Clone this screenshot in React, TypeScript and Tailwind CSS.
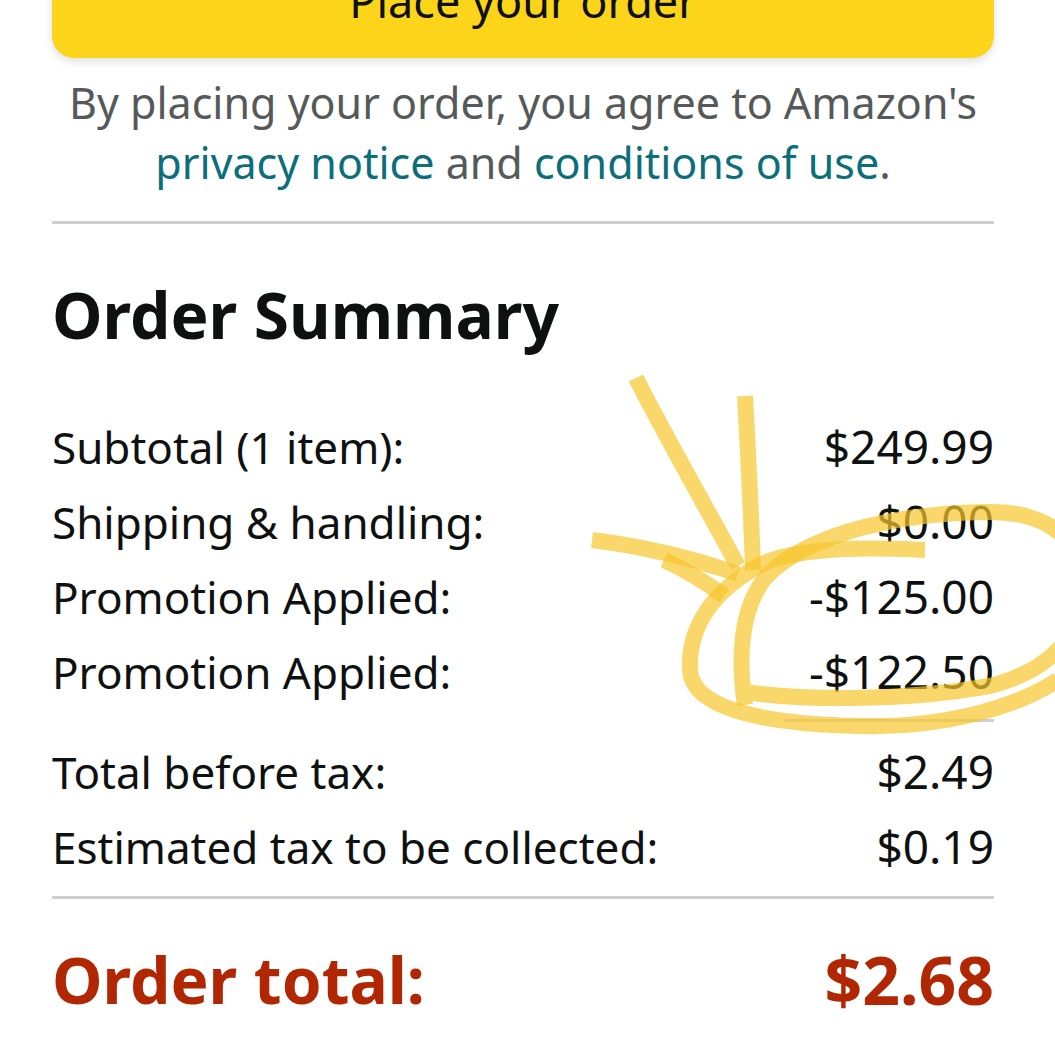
import React from "react";

// 주문 요약 행 데이터
interface Line {
  label: string;
  value: string;
}

const topLines: Line[] = [
  { label: "Subtotal (1 item):", value: "$249.99" },
  { label: "Shipping & handling:", value: "$0.00" },
  { label: "Promotion Applied:", value: "-$125.00" },
  { label: "Promotion Applied:", value: "-$122.50" },
];

const taxLines: Line[] = [
  { label: "Total before tax:", value: "$2.49" },
  { label: "Estimated tax to be collected:", value: "$0.19" },
];

const Row = ({ line }: { line: Line }) => (
  <div className="flex items-center justify-between h-[75px] text-[#0f1111]">
    <span className="text-[44px]">{line.label}</span>
    <span className="text-[46px]">{line.value}</span>
  </div>
);

// 형광펜 낙서 (화살표 + 동그라미)
const Scribble = () => (
  <svg
    className="absolute inset-0 pointer-events-none"
    width="1055"
    height="1055"
    viewBox="0 0 1055 1055"
    fill="none"
  >
    <g
      stroke="#f6c62b"
      strokeOpacity="0.7"
      strokeWidth="16"
      strokeLinecap="butt"
      strokeLinejoin="round"
    >
      {/* arrow */}
      <path d="M636 378 C662 430, 702 500, 738 566" />
      <path d="M745 396 C748 450, 751 510, 753 570" />
      <path d="M592 540 C640 546, 692 558, 738 574" />
      <path d="M664 560 C690 572, 708 584, 724 596" />
      {/* outer loop */}
      <path d="M925 550 C880 548, 800 545, 760 565 C715 590, 688 625, 690 670 C692 708, 760 724, 860 726 C950 728, 1020 705, 1058 680" />
      {/* inner loop */}
      <path d="M745 705 C738 660, 740 610, 765 578 C800 540, 880 514, 985 512 C1050 510, 1088 545, 1085 592 C1080 640, 1045 672, 990 686 C900 702, 800 700, 745 692" />
    </g>
  </svg>
);

export default function App() {
  return (
    <div
      className="relative w-[1055px] h-[1055px] overflow-hidden bg-white"
      style={{ fontFamily: '"Noto Sans", "Open Sans", Arial, sans-serif' }}
    >
      <div className="pl-[52px] pr-[61px]">
        {/* 주문 버튼 (위쪽 잘림) */}
        <div className="-mt-[56px] h-[114px] rounded-[22px] bg-[#fcd419] flex items-center justify-center shadow-[0_4px_10px_rgba(0,0,0,0.12)]">
          <span className="text-[45px] text-[#0f1111]">Place your order</span>
        </div>

        <p className="mt-[15px] text-center text-[43px] leading-[60px] text-[#565959]">
          By placing your order, you agree to Amazon's{" "}
          <span className="text-[#0b6e7a]">privacy notice</span> and{" "}
          <span className="text-[#0b6e7a]">conditions of use</span>.
        </p>

        <div className="mt-[28px] h-[3px] bg-[#cfcfcf]" />

        <h2 className="mt-[53px] text-[64px] leading-[76px] font-bold text-[#0f1111]">
          Order Summary
        </h2>

        <div className="mt-[56px]">
          {topLines.map((l, i) => (
            <Row key={i} line={l} />
          ))}
        </div>

        <div className="flex justify-end mt-[10px]">
          <div className="w-[210px] h-[3px] bg-[#cfcfcf]" />
        </div>

        <div className="mt-[12px]">
          {taxLines.map((l, i) => (
            <Row key={i} line={l} />
          ))}
        </div>

        <div className="mt-[12px] h-[3px] bg-[#cfcfcf]" />

        <div className="mt-[43px] flex items-center justify-between h-[75px] font-bold text-[#b12704]">
          <span className="text-[64px]">Order total:</span>
          <span className="text-[66px]">$2.68</span>
        </div>
      </div>

      <Scribble />
    </div>
  );
}
